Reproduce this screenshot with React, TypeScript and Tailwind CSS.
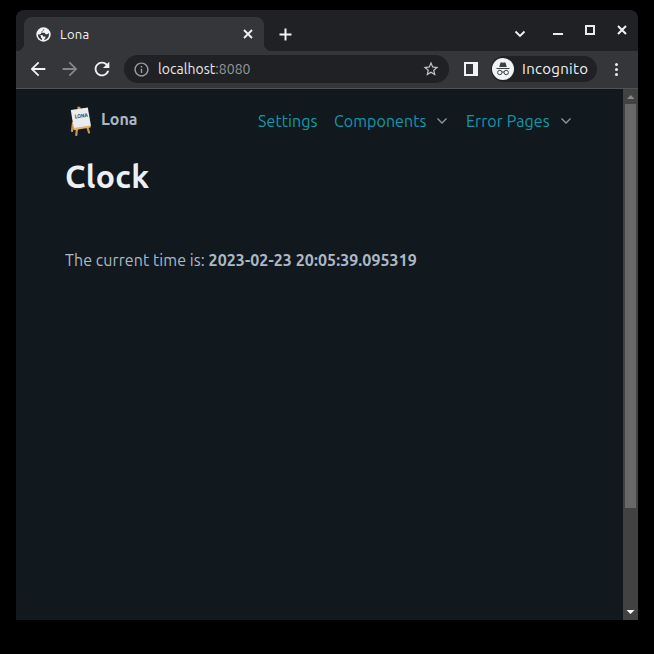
import React from "react";
import { MdArrowBack, MdArrowForward, MdRefresh, MdInfoOutline, MdStarBorder } from "react-icons/md";

function Chevron({ className }: { className: string }) {
  return (
    <svg viewBox="0 0 12 8" className={className} fill="none" stroke="currentColor">
      <path d="M1.500 1.500 6 6l4.500-4.500" />
    </svg>
  );
}

function Cross({ className }: { className: string }) {
  return (
    <svg viewBox="0 0 10 10" className={className} fill="none" stroke="currentColor">
      <path d="m1 1 8 8M9 1 1 9" />
    </svg>
  );
}

function Globe() {
  return (
    <svg viewBox="0 0 15 15" className="size-[15px] shrink-0">
      <circle cx="7.500" cy="7.500" r="7.200" fill="#f1f3f4" />
      <path d="M8.500 1.900q-1.800.3-1.700 1.500-.1.900-1.300 1v1.400h2.600q1.300.2 1.400 1.400h1.500q.9-.1 1.100-.9l.8.100q.4 2.500-1 4.300-1.400 1.900-3.700 2.300v-1.100q1.100-.3 1.200-1.200V9.500H7.200L6.400 8 2 7.200q-.2 2 1 3.700 1.200 1.600 3.100 2.100v-1.400L4.900 10.400V9l-1-1Z" fill="#35363a" />
    </svg>
  );
}

function TitleBar() {
  return (
    <div className="flex h-[41px] items-end bg-[#202124] pl-2 text-[#f1f3f4]">
      <div className="relative flex h-[34px] w-60 items-center rounded-t-lg bg-[#35363a] pl-3">
        <Globe />
        <span className="ml-[9px] w-[183px] text-[13px] leading-4 tracking-[0.3px]">Lona</span>
        <Cross className="size-[10px] shrink-0 stroke-[1.8]" />
        <span className="absolute bottom-0 -left-2 size-2 bg-[radial-gradient(circle_at_0_0,#202124_8px,#35363a_8.500px)]" />
        <span className="absolute -right-2 bottom-0 size-2 bg-[radial-gradient(circle_at_100%_0,#202124_8px,#35363a_8.500px)]" />
      </div>
      <div className="flex h-[34px] flex-1 items-center pl-[15px]">
        <svg viewBox="0 0 13 13" className="size-[13px]" fill="none" stroke="currentColor" strokeWidth="2">
          <path d="M6.500 0.500v12M0.500 6.500h12" />
        </svg>
      </div>
      <div className="flex h-[34px] shrink-0 items-start pr-[11px]">
        <Chevron className="mt-[13px] mr-[27px] h-2 w-3 stroke-[1.8]" />
        <span className="mt-4 mr-[22px] h-[2px] w-[10px] bg-[#e8eaed]" />
        <span className="mt-2 mr-[22px] size-[10px] border-2 border-[#e8eaed]" />
        <Cross className="mt-2 size-[10px] stroke-2" />
      </div>
    </div>
  );
}

function IncognitoIcon() {
  return (
    <svg viewBox="0 0 22 22" className="size-[22px] shrink-0">
      <circle cx="11" cy="11" r="11" fill="#f1f3f4" />
      <path d="M7.200 9 8.400 4.900q.3-.7 1-.5l1.600.4 1.600-.4q.7-.2 1 .5L14.800 9z" fill="#3c4043" />
      <path d="M4.500 10.500h13" stroke="#3c4043" strokeWidth="1.100" />
      <g fill="none" stroke="#3c4043">
        <circle cx="7.800" cy="14.500" r="2.200" />
        <circle cx="14.200" cy="14.500" r="2.200" />
        <path d="M9.900 14.200q1.100-.7 2.200 0" />
      </g>
    </svg>
  );
}

function Toolbar() {
  return (
    <div className="flex h-[38px] items-center border-b border-[#505256] bg-[#35363a] pr-[17px] pb-px pl-[11px] text-[#f1f3f4]">
      <MdArrowBack className="mb-px size-[22px] shrink-0" />
      <MdArrowForward className="mb-px ml-[10px] size-[22px] shrink-0 text-[#85868a]" />
      <MdRefresh className="ml-[10px] size-[22px] shrink-0" />
      <div className="ml-[11px] flex h-7 w-[325px] shrink-0 items-center rounded-full bg-[#202124] pl-[9px]">
        <MdInfoOutline className="size-[17px] text-[#9aa0a6]" />
        <span className="ml-2 w-[264px] text-[14px] leading-5 tracking-[0.04px] whitespace-nowrap text-[#e8eaed]">
          localhost<span className="text-[#96989c]">:8080</span>
        </span>
        <MdStarBorder className="size-[18px] text-[#c4c6ca]" />
      </div>
      <svg viewBox="0 0 14 14" className="ml-[15px] size-[14px] shrink-0" fill="currentColor">
        <path d="M0 0h14v14H0zM2 2v10h7V2z" fillRule="evenodd" />
      </svg>
      <div className="ml-[13px] flex h-[26px] w-[106px] shrink-0 items-center rounded-full bg-[#202124] pl-px">
        <IncognitoIcon />
        <span className="ml-2 text-[15px] leading-5 tracking-[0.3px]">Incognito</span>
      </div>
      <div className="ml-auto flex w-[9px] flex-col items-center gap-[2px]">
        <span className="size-[3px] rounded-full bg-[#e8eaed]" />
        <span className="size-[3px] rounded-full bg-[#e8eaed]" />
        <span className="size-[3px] rounded-full bg-[#e8eaed]" />
      </div>
    </div>
  );
}

function EaselLogo() {
  return (
    <svg viewBox="0 0 22 30" className="h-[30px] w-[22px] shrink-0">
      <path d="m3 17-1 8M7 22l-.700 7M17 20l2 6.500" stroke="#c99a55" strokeWidth="2.200" strokeLinecap="round" />
      <path d="M7.200.700h3l.5 3h-3z" fill="#c99a55" />
      <path d="m.8 4 17-2.500L21 20 3.800 23z" fill="#ebecef" />
      <path d="m3.500 23.200 17-2.700" stroke="#dfb56f" strokeWidth="2.200" />
      <text x="5" y="12.500" fontSize="5.500" fontWeight="bold" fill="#303238" transform="rotate(-7 5 12)" textLength="13" lengthAdjust="spacingAndGlyphs">LONA</text>
    </svg>
  );
}

function Nav() {
  return (
    <nav className="flex h-[49px] items-start text-base whitespace-nowrap text-[#1098a9]">
      <span className="mt-px ml-[5px]"><EaselLogo /></span>
      <strong className="mt-[2px] ml-[9px] w-[157px] text-[#aeb8c4]">Lona</strong>
      <a className="mt-1 w-[76px] tracking-[0.08px]">Settings</a>
      <a className="mt-1 w-[102px] tracking-[0.05px]">Components</a>
      <Chevron className="mt-[12px] h-2 w-3 stroke-[1.300] text-[#8d9aa5]" />
      <a className="mt-1 ml-[18px] w-[94px] tracking-[0.08px]">Error Pages</a>
      <Chevron className="mt-[12px] h-2 w-3 stroke-[1.300] text-[#8d9aa5]" />
    </nav>
  );
}

export default function App() {
  return (
    <div className="h-[654px] w-[654px] bg-black pt-[10px] pl-4 font-['Ubuntu','Noto_Sans',sans-serif]">
      <div className="flex h-[610px] w-[622px] flex-col overflow-hidden rounded-t-lg">
        <TitleBar />
        <Toolbar />
        <div className="flex min-h-0 flex-1">
          <main className="flex-1 bg-[#11191f] px-[49px] pt-4">
            <Nav />
            <h1 className="text-[32px] leading-[44px] font-bold tracking-[0.3px] text-[#edf0f3]">Clock</h1>
            <p className="mt-[50px] text-base tracking-[0.07px] whitespace-nowrap text-[#aeb8c4]">
              The current time is: <b>2023-02-23 20:05:39.095319</b>
            </p>
          </main>
          <div className="flex w-[15px] flex-col items-center bg-[#424242]">
            <svg viewBox="0 0 15 15" className="size-[15px]"><path d="M4 10h7.500L7.750 6z" fill="#8a8a8a" /></svg>
            <div className="h-[404px] w-[11px] bg-[#686868]" />
            <svg viewBox="0 0 15 15" className="mt-auto size-[15px]"><path d="M3.500 5h8L7.500 9z" fill="#fff" /></svg>
          </div>
        </div>
      </div>
    </div>
  );
}
